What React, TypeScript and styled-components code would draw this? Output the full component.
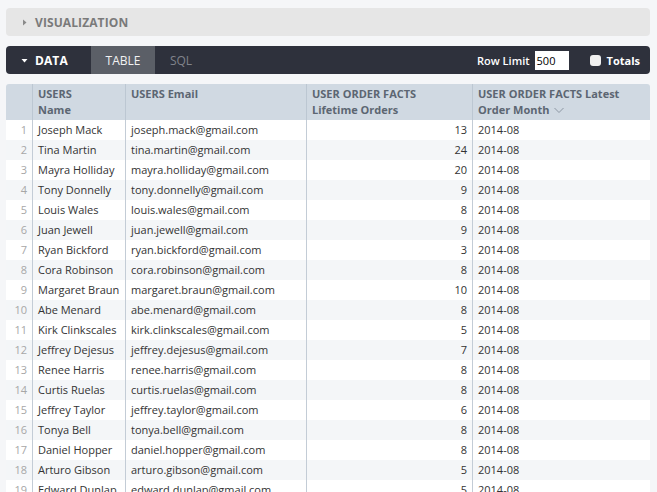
import React from "react";
import styled, { createGlobalStyle } from "styled-components";

const Global = createGlobalStyle`
  html, body { margin: 0; padding: 0; background: #f5f6f8; }
  body { font-family: "Open Sans", "Noto Sans", sans-serif; font-size: 11px; color: #333333; overflow: hidden; }
`;

const Page = styled.div`
  padding: 8px 7px 0 6px;
  display: flex;
  flex-direction: column;
  width: 644px;
`;

const SectionBar = styled.div<{ $dark?: boolean }>`
  height: 28px;
  border-radius: 4px;
  display: flex;
  align-items: center;
  background: ${(p) => (p.$dark ? "#2e313c" : "#e6e6e6")};
  margin-bottom: 10px;
  overflow: hidden;
`;

const SectionTitle = styled.div<{ $dark?: boolean }>`
  display: flex;
  align-items: center;
  gap: 7px;
  padding-left: 15px;
  width: ${(p) => (p.$dark ? "70px" : "auto")};
  font-weight: 700;
  font-size: 12px;
  color: ${(p) => (p.$dark ? "#ffffff" : "#7a7a7a")};
  letter-spacing: 0.1px;
`;

const Tab = styled.div<{ $active?: boolean; $w: number }>`
  height: 28px;
  display: flex;
  align-items: center;
  justify-content: center;
  width: ${(p) => p.$w}px;
  font-size: 12px;
  background: ${(p) => (p.$active ? "#5b5f67" : "transparent")};
  color: ${(p) => (p.$active ? "#f2f2f2" : "#80838b")};
`;

const Spacer = styled.div`
  flex: 1;
`;

const Controls = styled.div`
  display: flex;
  align-items: center;
  color: #fff;
  font-size: 11px;
  font-weight: 600;
  padding-right: 10px;
`;

const LimitInput = styled.div`
  width: 32px;
  height: 19px;
  background: #fff;
  color: #000;
  font-size: 11px;
  font-weight: 400;
  line-height: 19px;
  padding-left: 2px;
  margin-left: 5px;
  margin-right: 21px;
`;

const Check = styled.div`
  width: 11px;
  height: 11px;
  border-radius: 3px;
  background: #f0f0f0;
  margin-right: 6px;
`;

const Bold = styled.span`
  font-weight: 700;
`;

const Table = styled.div`
  display: grid;
  grid-template-columns: 26px 93px 181px 166px 178px;
  border-radius: 3px 3px 0 0;
  overflow: hidden;
`;

const HeadCell = styled.div<{ $first?: boolean }>`
  background: #d0d9e2;
  color: #5c6672;
  font-weight: 700;
  font-size: 11px;
  line-height: 16px;
  padding: 2px 5px;
  height: 32px;
  border-left: ${(p) => (p.$first ? "none" : "1px solid #bcc7d2")};
`;

const Cell = styled.div<{ $alt?: boolean; $kind?: "num" | "idx" | "txt"; $first?: boolean }>`
  height: 20px;
  line-height: 20px;
  padding: 0 5px;
  background: ${(p) => (p.$alt ? "#f4f6f8" : "#ffffff")};
  text-align: ${(p) => (p.$kind === "txt" ? "left" : "right")};
  color: ${(p) => (p.$kind === "idx" ? "#a7a7a7" : "#333333")};
  border-left: ${(p) => (p.$first ? "none" : "1px solid #c3ccd6")};
  white-space: nowrap;
  overflow: hidden;
`;

const Caret = ({ down }: { down?: boolean }) => (
  <svg width="7" height="7" viewBox="0 0 7 7">
    {down ? <path d="M0.5 2 L6.5 2 L3.5 5.5 Z" fill="#fff" /> : <path d="M2 0.5 L5.5 3.5 L2 6.5 Z" fill="#8a8a8a" />}
  </svg>
);

const Chevron = () => (
  <svg width="10" height="7" viewBox="0 0 10 7" style={{ marginLeft: 5 }}>
    <path d="M0.5 1 L5 5.5 L9.5 1" stroke="#8c96a2" strokeWidth="1" fill="none" />
  </svg>
);

const rows: [string, string, number][] = [
  ["Joseph Mack", "joseph.mack@gmail.com", 13],
  ["Tina Martin", "tina.martin@gmail.com", 24],
  ["Mayra Holliday", "mayra.holliday@gmail.com", 20],
  ["Tony Donnelly", "tony.donnelly@gmail.com", 9],
  ["Louis Wales", "louis.wales@gmail.com", 8],
  ["Juan Jewell", "juan.jewell@gmail.com", 9],
  ["Ryan Bickford", "ryan.bickford@gmail.com", 3],
  ["Cora Robinson", "cora.robinson@gmail.com", 8],
  ["Margaret Braun", "margaret.braun@gmail.com", 10],
  ["Abe Menard", "abe.menard@gmail.com", 8],
  ["Kirk Clinkscales", "kirk.clinkscales@gmail.com", 5],
  ["Jeffrey Dejesus", "jeffrey.dejesus@gmail.com", 7],
  ["Renee Harris", "renee.harris@gmail.com", 8],
  ["Curtis Ruelas", "curtis.ruelas@gmail.com", 8],
  ["Jeffrey Taylor", "jeffrey.taylor@gmail.com", 6],
  ["Tonya Bell", "tonya.bell@gmail.com", 8],
  ["Daniel Hopper", "daniel.hopper@gmail.com", 8],
  ["Arturo Gibson", "arturo.gibson@gmail.com", 5],
  ["Edward Dunlap", "edward.dunlap@gmail.com", 5],
];

export default function App() {
  return (
    <>
      <Global />
      <Page>
        <SectionBar>
          <SectionTitle>
            <Caret />
            VISUALIZATION
          </SectionTitle>
        </SectionBar>
        <SectionBar $dark>
          <SectionTitle $dark>
            <Caret down />
            DATA
          </SectionTitle>
          <Tab $active $w={64}>TABLE</Tab>
          <Tab $w={52}>SQL</Tab>
          <Spacer />
          <Controls>
            Row Limit
            <LimitInput>500</LimitInput>
            <Check />
            <Bold>Totals</Bold>
          </Controls>
        </SectionBar>
        <Table>
          <HeadCell $first />
          <HeadCell>
            USERS
            <br />
            Name
          </HeadCell>
          <HeadCell>USERS Email</HeadCell>
          <HeadCell>
            USER ORDER FACTS
            <br />
            Lifetime Orders
          </HeadCell>
          <HeadCell>
            USER ORDER FACTS Latest
            <br />
            Order Month
            <Chevron />
          </HeadCell>
          {rows.map(([name, email, n], i) => {
            const alt = i % 2 === 1;
            return (
              <React.Fragment key={i}>
                <Cell $alt={alt} $kind="idx" $first>
                  {i + 1}
                </Cell>
                <Cell $alt={alt} $kind="txt">
                  {name}
                </Cell>
                <Cell $alt={alt} $kind="txt">
                  {email}
                </Cell>
                <Cell $alt={alt} $kind="num">
                  {n}
                </Cell>
                <Cell $alt={alt} $kind="txt">
                  2014-08
                </Cell>
              </React.Fragment>
            );
          })}
        </Table>
      </Page>
    </>
  );
}
